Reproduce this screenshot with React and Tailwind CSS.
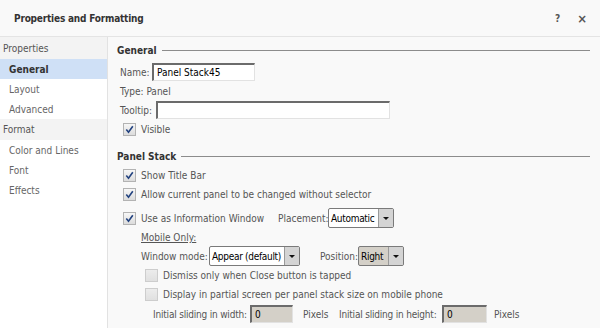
import React from "react";

const Check = ({ checked }) => (
  <span
    className={
      checked
        ? "w-[13px] h-[13px] shrink-0 border border-[#b3b3b3] bg-linear-to-b from-[#f7f7f7] to-[#dcdcdc] flex items-center justify-center"
        : "w-[13px] h-[13px] shrink-0 border border-[#cdcdcd] bg-linear-to-b from-[#ececec] to-[#e0e0e0]"
    }
  >
    {checked && (
      <svg width="9" height="9" viewBox="0 0 9 9">
        <path d="M1.3 4.6 L3.5 7.3 L7.8 1.2" fill="none" stroke="#22427f" strokeWidth="1.6" />
      </svg>
    )}
  </span>
);

const Arrow = () => (
  <span className="w-[15px] self-stretch border-l border-[#9a9a9a] bg-[#d4d4d4] flex items-center justify-center shrink-0">
    <span className="w-0 h-0 border-l-[3px] border-r-[3px] border-t-[3px] border-l-transparent border-r-transparent border-t-[#111]" />
  </span>
);

const Select = ({ className, value, bg }) => (
  <div className={"flex items-center border border-[#7a7a7a] rounded-[2px] overflow-hidden " + bg + " " + className}>
    <span className="flex-1 pl-[2px] text-black text-[10px] tracking-[-0.3px] whitespace-nowrap overflow-hidden">{value}</span>
    <Arrow />
  </div>
);

const Sunken = ({ className, value }) => (
  <div
    className={
      "flex items-center pl-[3px] text-black border-t-2 border-l-2 border-r border-b border-t-[#6b6b6b] border-l-[#6b6b6b] border-r-[#e2e2e2] border-b-[#e2e2e2] " +
      className
    }
  >
    {value}
  </div>
);

const CheckRow = ({ checked, label, className }) => (
  <div className={"flex items-center " + className}>
    <Check checked={checked} />
    <span className="ml-[5px] whitespace-nowrap">{label}</span>
  </div>
);

const Header = ({ label, className }) => (
  <div className={"flex items-center h-[18px] pr-[10px] " + className}>
    <span className="font-bold text-[#333] whitespace-nowrap">{label}</span>
    <span className="flex-1 ml-[5px] border-t border-[#8c8c8c]" />
  </div>
);

export default function App() {
  return (
    <div className="w-[600px] h-[328px] overflow-hidden bg-[#f9f9f9] flex flex-col font-['DejaVu_Sans_Condensed','Liberation_Sans',Arial,sans-serif] text-[10px] text-[#555]">
      <div className="h-[37px] shrink-0 flex items-center border-b border-[#e4e4e4] pl-[14px] pr-[13px]">
        <span className="font-bold text-[#333] text-[10px] tracking-[-0.2px]">Properties and Formatting</span>
        <span className="ml-auto font-bold text-[#555] text-[10px]">?</span>
        <span className="ml-[17px] font-bold text-[#555] text-[13px] leading-none">×</span>
      </div>
      <div className="flex flex-1 min-h-0">
        <div className="w-[108px] shrink-0 bg-white border-r border-[#e2e2e2] flex flex-col text-[#666]">
          <div className="h-[22px] flex items-center pl-[3px] bg-[#f3f3f3] text-[#555]">Properties</div>
          <div className="h-[20px] flex items-center pl-[9px] bg-[#cfe0f6] font-bold text-[#333]">General</div>
          <div className="h-[20px] flex items-center pl-[9px]">Layout</div>
          <div className="h-[20px] flex items-center pl-[9px]">Advanced</div>
          <div className="h-[21px] flex items-center pl-[3px] bg-[#f3f3f3] text-[#555]">Format</div>
          <div className="h-[20px] flex items-center pl-[9px]">Color and Lines</div>
          <div className="h-[20px] flex items-center pl-[9px]">Font</div>
          <div className="h-[20px] flex items-center pl-[9px]">Effects</div>
        </div>
        <div className="flex-1 flex flex-col pl-[9px]">
          <Header label="General" className="mt-[4px]" />
          <div className="mt-[4px] h-[18px] flex items-center pl-[3px]">
            <span className="w-[32px]">Name:</span>
            <Sunken className="w-[103px] h-[18px] bg-white" value="Panel Stack45" />
          </div>
          <div className="mt-[1px] h-[19px] flex items-center pl-[3px]">Type: Panel</div>
          <div className="h-[18px] flex items-center pl-[3px]">
            <span className="w-[36px]">Tooltip:</span>
            <Sunken className="w-[234px] h-[18px] bg-white" value="" />
          </div>
          <CheckRow checked label="Visible" className="mt-[1px] h-[18px] pl-[6px]" />
          <Header label="Panel Stack" className="mt-[9px]" />
          <CheckRow checked label="Show Title Bar" className="mt-[1px] h-[18px] pl-[6px]" />
          <CheckRow checked label="Allow current panel to be changed without selector" className="mt-[1px] h-[18px] pl-[6px]" />
          <div className="mt-[4px] h-[22px] flex items-center">
            <CheckRow checked label="Use as Information Window" className="w-[161px] pl-[6px]" />
            <span className="w-[50px] whitespace-nowrap">Placement:</span>
            <Select className="w-[66px] h-[20px]" bg="bg-white" value="Automatic" />
          </div>
          <div className="h-[17px] flex items-center pl-[24px]">
            <span className="underline">Mobile Only:</span>
          </div>
          <div className="h-[20px] flex items-center pl-[24px]">
            <span className="w-[68px] whitespace-nowrap">Window mode:</span>
            <Select className="w-[91px] h-[20px]" bg="bg-white" value="Appear (default)" />
            <span className="ml-[20px] w-[38px]">Position:</span>
            <Select className="w-[46px] h-[20px]" bg="bg-[#d4d0c8]" value="Right" />
          </div>
          <CheckRow checked={false} label="Dismiss only when Close button is tapped" className="h-[18px] pl-[28px]" />
          <CheckRow checked={false} label="Display in partial screen per panel stack size on mobile phone" className="mt-[1px] h-[18px] pl-[28px]" />
          <div className="mt-[1px] h-[20px] flex items-center pl-[36px]">
            <span className="w-[97px] whitespace-nowrap tracking-[-0.2px]">Initial sliding in width:</span>
            <Sunken className="w-[43px] h-[18px] bg-[#d4d0c8]" value="0" />
            <span className="ml-[10px] w-[36px]">Pixels</span>
            <span className="w-[103px] whitespace-nowrap tracking-[-0.2px]">Initial sliding in height:</span>
            <Sunken className="w-[45px] h-[18px] bg-[#d4d0c8]" value="0" />
            <span className="ml-[7px]">Pixels</span>
          </div>
        </div>
      </div>
    </div>
  );
}
